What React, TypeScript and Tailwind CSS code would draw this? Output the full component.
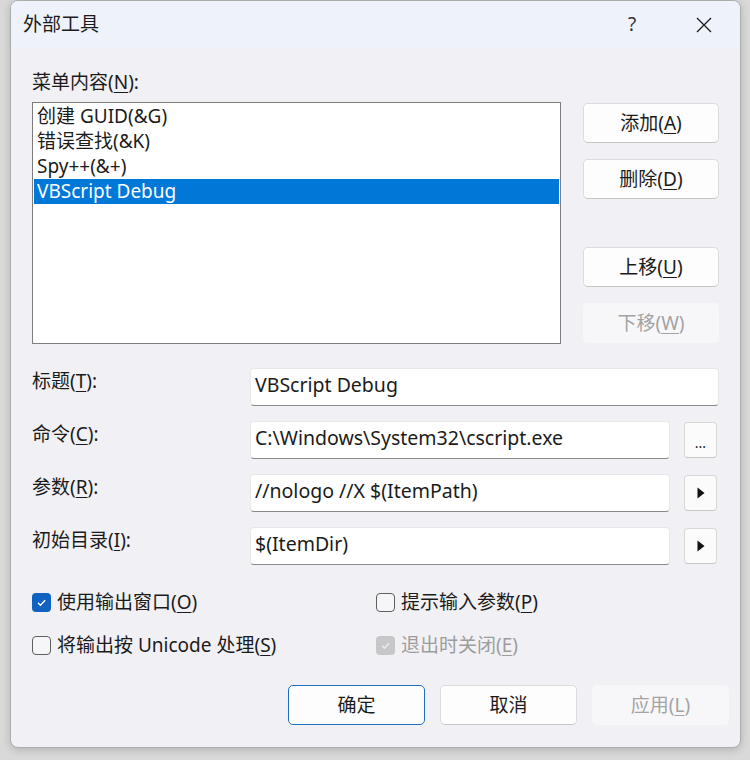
import React from "react";

function U({ children }: { children: React.ReactNode }) {
  return <span className="underline underline-offset-[3px] decoration-1">{children}</span>;
}

function Btn({
  children,
  disabled,
  focused,
  className = "",
}: {
  children: React.ReactNode;
  disabled?: boolean;
  focused?: boolean;
  className?: string;
}) {
  const base = "h-[40px] flex items-center justify-center rounded-[5px] shrink-0";
  if (disabled)
    return <div className={`${base} bg-[#f7f7f9] text-[#a3a3a3] ${className}`}>{children}</div>;
  if (focused)
    return (
      <div className={`${base} bg-[#fdfdfd] border border-[#1f6fc0] ${className}`}>{children}</div>
    );
  return (
    <div
      className={`${base} bg-[#fdfdfd] border border-[#dcdcdc] border-b-[#c6c6c6] ${className}`}
    >
      {children}
    </div>
  );
}

function Check({ checked, disabled }: { checked?: boolean; disabled?: boolean }) {
  if (checked) {
    return (
      <div
        className={`w-[19px] h-[19px] rounded-[4px] flex items-center justify-center shrink-0 ${
          disabled ? "bg-[#c7c7c9]" : "bg-[#0f62c0]"
        }`}
      >
        <svg width="13" height="13" viewBox="0 0 13 13">
          <path d="M3 6.8l2.4 2.4 4.8-5" fill="none" stroke={disabled ? "#eeeeee" : "#ffffff"} strokeWidth="1.3" />
        </svg>
      </div>
    );
  }
  return (
    <div className="w-[19px] h-[19px] rounded-[4px] border border-[#5f5f5f] bg-[#f6f6f8] shrink-0" />
  );
}

function Field({
  label,
  value,
  side,
}: {
  label: React.ReactNode;
  value: string;
  side?: "dots" | "arrow";
}) {
  return (
    <div className="flex items-start h-[38px]">
      <div className="w-[218px] shrink-0 pt-[1px]">{label}</div>
      <div className={`flex-1 flex items-center ${side ? "mr-[2px]" : ""}`}>
        <div className="flex-1 h-[38px] bg-white rounded-[4px] border border-[#e8e8e8] border-b-[#8a8a8a] pl-[4px] pb-[5px] flex items-center whitespace-nowrap text-[19.5px]">
          {value}
        </div>
        {side && (
          <div className="ml-[14px] w-[33px] h-[36px] rounded-[4px] border border-[#d8d8d8] border-b-[#c8c8c8] bg-[#fbfbfb] flex items-center justify-center shrink-0">
            {side === "dots" ? (
              <span className="text-[14px] leading-none pt-[6px]">...</span>
            ) : (
              <svg width="8" height="12" viewBox="0 0 8 12">
                <path d="M0.5 0.5L7.5 6L0.5 11.5Z" fill="#111111" />
              </svg>
            )}
          </div>
        )}
      </div>
    </div>
  );
}

export default function App() {
  return (
    <div className="w-[750px] h-[760px] bg-[#d9d9d9] pl-[10px] font-['Noto_Sans','Noto_Sans_CJK_SC',sans-serif] text-[19px] leading-[25px] text-[#1b1b1b]">
      <div className="w-[731px] h-[748px] flex flex-col rounded-[8px] border border-[#adadad] bg-[#f1f0f4] overflow-hidden shadow-[0_2px_8px_rgba(0,0,0,0.18)]">
        {/* Title bar */}
        <div className="h-[47px] bg-[#eef2fa] flex items-center pl-[12px] pr-[16px] shrink-0">
          <span className="flex-1">外部工具</span>
          <span className="w-[40px] text-center text-[#333333]">?</span>
          <div className="ml-[32px] w-[40px] flex items-center justify-center">
            <svg width="16" height="16" viewBox="0 0 16 16">
              <path d="M1 1L15 15M15 1L1 15" stroke="#1b1b1b" strokeWidth="1.3" />
            </svg>
          </div>
        </div>

        {/* Body */}
        <div className="flex-1 flex flex-col px-[21px]">
          <div className="pt-[22px]">
            菜单内容(<U>N</U>):
          </div>

          <div className="mt-[7px] flex gap-[22px]">
            <div className="w-[529px] h-[242px] bg-white border border-[#7d7d7d] p-[1px] shrink-0">
              <div className="h-[25px] pl-[3px] whitespace-nowrap">创建 GUID(&amp;G)</div>
              <div className="h-[25px] pl-[3px] whitespace-nowrap">错误查找(&amp;K)</div>
              <div className="h-[25px] pl-[3px] whitespace-nowrap">Spy++(&amp;+)</div>
              <div className="h-[25px] pl-[3px] whitespace-nowrap bg-[#0078d7] text-white">
                VBScript Debug
              </div>
            </div>
            <div className="flex-1 flex flex-col pt-[1px]">
              <Btn>
                添加(<U>A</U>)
              </Btn>
              <Btn className="mt-[16px]">
                删除(<U>D</U>)
              </Btn>
              <Btn className="mt-[48px]">
                上移(<U>U</U>)
              </Btn>
              <Btn className="mt-[16px]" disabled>
                下移(<U>W</U>)
              </Btn>
            </div>
          </div>

          <div className="mt-[24px] flex flex-col gap-[15px]">
            <Field
              label={
                <>
                  标题(<U>T</U>):
                </>
              }
              value="VBScript Debug"
            />
            <Field
              label={
                <>
                  命令(<U>C</U>):
                </>
              }
              value="C:\Windows\System32\cscript.exe"
              side="dots"
            />
            <Field
              label={
                <>
                  参数(<U>R</U>):
                </>
              }
              value="//nologo //X $(ItemPath)"
              side="arrow"
            />
            <Field
              label={
                <>
                  初始目录(<U>I</U>):
                </>
              }
              value="$(ItemDir)"
              side="arrow"
            />
          </div>

          <div className="mt-[25px] grid grid-cols-[344px_1fr] gap-y-[18px]">
            <div className="flex items-center gap-[6px] h-[25px]">
              <Check checked />
              <span>
                使用输出窗口(<U>O</U>)
              </span>
            </div>
            <div className="flex items-center gap-[6px] h-[25px]">
              <Check />
              <span>
                提示输入参数(<U>P</U>)
              </span>
            </div>
            <div className="flex items-center gap-[6px] h-[25px]">
              <Check />
              <span>
                将输出按 Unicode 处理(<U>S</U>)
              </span>
            </div>
            <div className="flex items-center gap-[6px] h-[25px] text-[#9d9d9d]">
              <Check checked disabled />
              <span>
                退出时关闭(<U>E</U>)
              </span>
            </div>
          </div>

          <div className="mt-[27px] ml-[256px] flex gap-[15px]">
            <Btn focused className="w-[137px]">
              确定
            </Btn>
            <Btn className="w-[137px]">取消</Btn>
            <Btn disabled className="w-[137px]">
              应用(<U>L</U>)
            </Btn>
          </div>
        </div>
      </div>
    </div>
  );
}
